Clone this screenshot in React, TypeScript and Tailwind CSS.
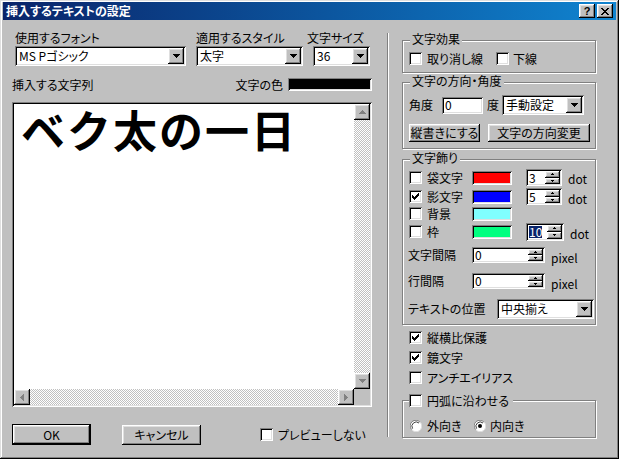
import React from "react";

const raised =
  "shadow-[inset_-1px_-1px_#000,inset_1px_1px_#fff,inset_-2px_-2px_#808080,inset_2px_2px_#dfdfdf]";
const sunken =
  "shadow-[inset_1px_1px_#808080,inset_-1px_-1px_#fff,inset_2px_2px_#000,inset_-2px_-2px_#dfdfdf]";
const etched = "border border-[#808080] shadow-[inset_1px_1px_#fff,1px_1px_#fff]";
const dither =
  "bg-[repeating-conic-gradient(#c0c0c0_0%_25%,#fff_0%_50%)] bg-[length:2px_2px]";

const paths = {
  down: "M0 0h7v1h-1v1h-1v1h-1v1h-1v-1h-1v-1h-1v-1h-1z",
  up: "M3 0h1v1h1v1h1v1h1v1h-7v-1h1v-1h1v-1h1z",
  left: "M3 0h1v7h-1v-1h-1v-1h-1v-1h-1v-1h1v-1h1v-1h1z",
  right: "M0 0h1v1h1v1h1v1h1v1h-1v1h-1v1h-1v1h-1z",
};

function Arrow({ dir, color = "#000" }: { dir: keyof typeof paths; color?: string }) {
  const horiz = dir === "left" || dir === "right";
  return (
    <svg width={horiz ? 4 : 7} height={horiz ? 7 : 4} shapeRendering="crispEdges">
      <path d={paths[dir]} fill={color} />
    </svg>
  );
}

function SmallArrow({ up }: { up?: boolean }) {
  return (
    <svg width="3" height="2" shapeRendering="crispEdges">
      <path d={up ? "M1 0h1v1h1v1h-3v-1h1z" : "M0 0h3v1h-1v1h-1v-1h-1z"} fill="#000" />
    </svg>
  );
}

function ArrowBtn({ dir }: { dir: keyof typeof paths }) {
  return (
    <span className={`flex items-center justify-center w-[16px] h-[16px] shrink-0 bg-[#c0c0c0] ${raised}`}>
      <Arrow dir={dir} color="#808080" />
    </span>
  );
}

function Combo({ value, className }: { value: string; className: string }) {
  return (
    <div className={`flex items-center justify-between bg-white p-[2px] h-[20px] ${sunken} ${className}`}>
      <span className="pl-[2px] whitespace-nowrap">{value}</span>
      <span className={`flex items-center justify-center w-[16px] h-[16px] bg-[#c0c0c0] ${raised}`}>
        <Arrow dir="down" />
      </span>
    </div>
  );
}

function Spin({ value, className, sel }: { value: string; className: string; sel?: boolean }) {
  return (
    <div className={`flex justify-between bg-white p-[2px] ${sunken} ${className}`}>
      <span className="pl-[1px] flex items-center">
        {sel ? <span className="bg-[#0a246a] text-white">{value}</span> : value}
      </span>
      <div className="flex flex-col w-[15px]">
        <span className={`flex-1 flex items-center justify-center bg-[#c0c0c0] ${raised}`}>
          <SmallArrow up />
        </span>
        <span className={`flex-1 flex items-center justify-center bg-[#c0c0c0] ${raised}`}>
          <SmallArrow />
        </span>
      </div>
    </div>
  );
}

function Check({ on }: { on?: boolean }) {
  return (
    <span className={`relative block w-[13px] h-[13px] shrink-0 bg-white ${sunken}`}>
      {on && (
        <svg className="absolute left-[3px] top-[3px]" width="7" height="7" shapeRendering="crispEdges">
          <path d="M6 0h1v3h-1v1h-1v1h-1v1h-1v1h-1v-1h-1v-1h-1v-3h1v1h1v1h1v-1h1v-1h1z" fill="#000" />
        </svg>
      )}
    </span>
  );
}

function Radio({ on }: { on?: boolean }) {
  return (
    <svg width="12" height="12" className="shrink-0">
      <circle cx="6" cy="6" r="5.5" fill="#fff" />
      <path d="M10 2.2A5.5 5.5 0 0 0 1.5 9.5" stroke="#808080" fill="none" />
      <path d="M9 3A4.3 4.3 0 0 0 2.6 8.6" stroke="#404040" fill="none" />
      <path d="M2 9.8A5.5 5.5 0 0 0 10.5 2.5" stroke="#dfdfdf" fill="none" />
      {on && <circle cx="6" cy="6" r="2" fill="#000" />}
    </svg>
  );
}

function Btn({ label, className }: { label: string; className: string }) {
  return (
    <span className={`flex items-center justify-center bg-[#c0c0c0] ${raised} ${className}`}>{label}</span>
  );
}

function Group({
  legend,
  className,
  children,
}: {
  legend: React.ReactNode;
  className: string;
  children: React.ReactNode;
}) {
  return (
    <div className={`relative ${etched} ${className}`}>
      <div className="absolute top-[-8px] left-[7px] px-[2px] bg-[#c0c0c0]">{legend}</div>
      {children}
    </div>
  );
}

function Swatch({ className }: { className: string }) {
  return <span className={`block w-[40px] h-[14px] ${sunken} ${className}`} />;
}

export default function App() {
  return (
    <div className="w-[619px] h-[459px] bg-[#c0c0c0] pt-[2px] px-[3px] text-black text-[12px] leading-[12px] font-['Noto_Sans_CJK_JP',sans-serif] [font-feature-settings:'palt'] shadow-[inset_-1px_-1px_#000,inset_1px_1px_#dfdfdf,inset_-2px_-2px_#808080,inset_2px_2px_#fff]">
      {/* title bar */}
      <div className="h-[18px] flex items-center justify-between bg-linear-to-r from-[#0a246a] to-[#1084d0] pl-[3px] pr-[3px]">
        <span className="text-white font-bold">挿入するテキストの設定</span>
        <div className="flex gap-[2px]">
          <span className={`flex items-center justify-center w-[16px] h-[14px] bg-[#c0c0c0] font-bold text-[11px] font-['Liberation_Sans',sans-serif] ${raised}`}>
            ?
          </span>
          <span className={`flex items-center justify-center w-[16px] h-[14px] bg-[#c0c0c0] ${raised}`}>
            <svg width="8" height="7" shapeRendering="crispEdges">
              <path
                d="M0 0h2v1h-2zM6 0h2v1h-2zM1 1h2v1h-2zM5 1h2v1h-2zM2 2h4v1h-4zM3 3h2v1h-2zM2 4h4v1h-4zM1 5h2v1h-2zM5 5h2v1h-2zM0 6h2v1h-2zM6 6h2v1h-2z"
                fill="#000"
              />
            </svg>
          </span>
        </div>
      </div>

      <div className="flex pl-[9px]">
        {/* left column */}
        <div className="w-[360px] flex flex-col">
          <div className="flex mt-[12px] ml-[3px]">
            <div className="flex flex-col w-[171px]">
              <span>使用するフォント</span>
              <Combo className="mt-[2px] w-[171px]" value="MS Pゴシック" />
            </div>
            <div className="flex flex-col w-[107px] ml-[10px]">
              <span>適用するスタイル</span>
              <Combo className="mt-[2px] w-[107px]" value="太字" />
            </div>
            <div className="flex flex-col w-[57px] ml-[10px]">
              <span className="ml-[-6px] whitespace-nowrap">文字サイズ</span>
              <Combo className="mt-[2px] w-[57px]" value="36" />
            </div>
          </div>

          <div className="flex items-center justify-between h-[13px] mt-[12px]">
            <span>挿入する文字列</span>
            <div className="flex items-center">
              <span>文字の色</span>
              <span className={`block ml-[5px] w-[84px] h-[13px] bg-black ${sunken}`} />
            </div>
          </div>

          <div className={`mt-[11px] h-[305px] bg-white p-[2px] flex flex-col ${sunken}`}>
            <div className="flex flex-1 min-h-0">
              <div className="flex-1 pl-[7px] pt-[1px] text-[44px] leading-[48px] font-bold tracking-[2px] whitespace-nowrap [font-feature-settings:normal]">
                ベク太の一日
              </div>
              <div className="flex flex-col w-[16px]">
                <ArrowBtn dir="up" />
                <div className={`flex-1 ${dither}`} />
                <ArrowBtn dir="down" />
              </div>
            </div>
            <div className="flex h-[16px]">
              <ArrowBtn dir="left" />
              <div className={`flex-1 ${dither}`} />
              <ArrowBtn dir="right" />
              <span className="w-[16px] bg-[#c0c0c0]" />
            </div>
          </div>

          <div className="flex items-center mt-[17px]">
            <span className="flex w-[79px] h-[21px] border border-black">
              <Btn label="OK" className="flex-1" />
            </span>
            <Btn label="キャンセル" className="ml-[31px] w-[79px] h-[20px]" />
            <span className="ml-[59px] flex items-center">
              <Check />
              <span className="ml-[5px]">プレビューしない</span>
            </span>
          </div>
        </div>

        {/* separator */}
        <div className="ml-[15px] mt-[13px] w-[2px] h-[404px] border-l border-[#808080] bg-white" />

        {/* right column */}
        <div className="ml-[13px] w-[194px] flex flex-col">
          <Group legend="文字効果" className="mt-[20px] h-[33px]">
            <div className="flex items-center pt-[11px] pl-[6px]">
              <span className="flex items-center w-[87px]">
                <Check />
                <span className="ml-[5px]">取り消し線</span>
              </span>
              <span className="flex items-center">
                <Check />
                <span className="ml-[4px]">下線</span>
              </span>
            </div>
          </Group>

          <Group legend="文字の方向・角度" className="mt-[9px] h-[67px]">
            <div className="flex items-center pt-[12px] pl-[6px] h-[32px]">
              <span className="w-[33px]">角度</span>
              <span className={`flex items-center w-[41px] h-[17px] bg-white pl-[3px] ${sunken}`}>0</span>
              <span className="ml-[4px] w-[15px]">度</span>
              <Combo className="w-[82px]" value="手動設定" />
            </div>
            <div className="flex items-center mt-[9px] pl-[6px]">
              <Btn label="縦書きにする" className="w-[71px] h-[18px]" />
              <Btn label="文字の方向変更" className="ml-[8px] w-[102px] h-[18px]" />
            </div>
          </Group>

          <Group legend="文字飾り" className="mt-[10px] h-[166px]">
            <div className="flex items-center mt-[9px] h-[17px] pl-[6px]">
              <Check />
              <span className="ml-[5px] w-[45px]">袋文字</span>
              <Swatch className="bg-[#ff0000]" />
              <Spin className="ml-[14px] w-[36px] h-[17px]" value="3" />
              <span className="ml-[6px] pt-[3px]">dot</span>
            </div>
            <div className="flex items-center mt-[2px] h-[17px] pl-[6px]">
              <Check on />
              <span className="ml-[5px] w-[45px]">影文字</span>
              <Swatch className="bg-[#0000ff]" />
              <Spin className="ml-[14px] w-[36px] h-[17px]" value="5" />
              <span className="ml-[6px] pt-[4px]">dot</span>
            </div>
            <div className="flex items-center h-[17px] pl-[6px]">
              <Check />
              <span className="ml-[5px] w-[45px]">背景</span>
              <Swatch className="bg-[#80ffff]" />
            </div>
            <div className="flex items-center mt-[1px] h-[17px] pl-[6px]">
              <Check />
              <span className="ml-[5px] w-[45px]">枠</span>
              <Swatch className="bg-[#00ff80]" />
              <Spin className="ml-[14px] w-[38px] h-[18px]" value="10" sel />
              <span className="ml-[6px] pt-[4px]">dot</span>
            </div>
            <div className="flex items-center mt-[7px] h-[16px] pl-[5px]">
              <span className="w-[64px]">文字間隔</span>
              <Spin className="w-[73px] h-[16px]" value="0" />
              <span className="ml-[6px] pt-[6px]">pixel</span>
            </div>
            <div className="flex items-center mt-[10px] h-[16px] pl-[5px]">
              <span className="w-[64px]">行間隔</span>
              <Spin className="w-[73px] h-[16px]" value="0" />
              <span className="ml-[6px] pt-[6px]">pixel</span>
            </div>
            <div className="flex items-center mt-[10px] h-[20px] pl-[5px]">
              <span className="w-[89px]">テキストの位置</span>
              <Combo className="w-[97px]" value="中央揃え" />
            </div>
          </Group>

          <div className="flex flex-col pl-[7px]">
            <span className="flex items-center mt-[6px]">
              <Check on />
              <span className="ml-[5px]">縦横比保護</span>
            </span>
            <span className="flex items-center mt-[7px]">
              <Check on />
              <span className="ml-[5px]">鏡文字</span>
            </span>
            <span className="flex items-center mt-[7px]">
              <Check />
              <span className="ml-[5px]">アンチエイリアス</span>
            </span>
          </div>

          <div className={`relative mt-[16px] h-[38px] ${etched}`}>
            <div className="absolute top-[-7px] left-[6px] flex items-center pr-[4px] bg-[#c0c0c0]">
              <Check />
              <span className="ml-[5px]">円弧に沿わせる</span>
            </div>
            <div className="flex items-center pt-[19px] pl-[7px]">
              <span className="flex items-center w-[64px]">
                <Radio />
                <span className="ml-[5px]">外向き</span>
              </span>
              <span className="flex items-center">
                <Radio on />
                <span className="ml-[4px]">内向き</span>
              </span>
            </div>
          </div>
        </div>
      </div>
    </div>
  );
}
